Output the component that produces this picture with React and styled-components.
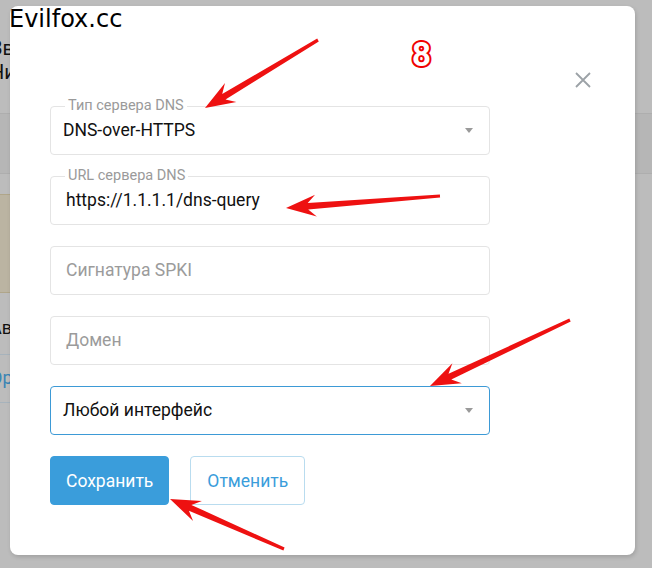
import React from 'react'
import styled, { createGlobalStyle } from 'styled-components'

const GlobalStyle = createGlobalStyle`
  html, body {
    margin: 0;
    padding: 0;
    background: #bcbcbc;
    font-family: Roboto, "Liberation Sans", sans-serif;
  }
`

const Page = styled.div`
  position: relative;
  width: 652px;
  height: 568px;
  overflow: hidden;
  background: #bcbcbc;
`

/* dimmed page behind the dialog */
const Backdrop = styled.div`
  display: flex;
  flex-direction: column;
`

const BackHeader = styled.div`
  height: 114px;
  border-bottom: 1px solid #aeaeae;
  padding-top: 36px;
  box-sizing: border-box;
  margin-left: -10px;
  font-size: 20px;
  line-height: 24px;
  color: #111;
`

const BackBand = styled.div`
  height: 59px;
  border-bottom: 1px solid #aeaeae;
  background: #b6b6b6;
`

const BackImage = styled.div`
  height: 97px;
  margin-top: 20px;
  width: 300px;
  background: #bbb4a2;
  border-top: 1px solid #b0a68a;
  border-bottom: 1px solid #b0a68a;
`

const BackText = styled.div`
  height: 62px;
  box-sizing: border-box;
  padding-top: 24px;
  margin-left: -10px;
  font-size: 18px;
  color: ${props => props.link ? '#3a85b5' : '#111'};
  border-bottom: 1px solid #a7b3bc;
  width: 300px;
`

const BackLink = styled(BackText)`
  height: 48px;
  padding-top: 12px;
`

const Dialog = styled.div`
  position: absolute;
  left: 10px;
  top: 6px;
  width: 625px;
  height: 549px;
  box-sizing: border-box;
  padding: 0 145px 0 40px;
  background: #fff;
  border-radius: 8px;
  box-shadow: 1px 2px 4px rgba(0, 0, 0, 0.15);
  display: flex;
  flex-direction: column;
`

const DialogHead = styled.div`
  height: 100px;
  position: relative;
`

const Close = styled.button`
  position: absolute;
  top: 64px;
  right: -103px;
  width: 20px;
  height: 20px;
  padding: 0;
  border: none;
  background: none;
  display: flex;
  align-items: center;
  justify-content: center;
`

const Fields = styled.div`
  display: flex;
  flex-direction: column;
  gap: 21px;
`

const Field = styled.div`
  position: relative;
  height: 49px;
  box-sizing: border-box;
  border: 1px solid ${props => props.focused ? '#3d9ad6' : '#e4e4e4'};
  border-radius: 4px;
  display: flex;
  align-items: center;
  padding: 0 ${props => props.select ? '12px' : '15px'};
  font-size: 17.5px;
  color: ${props => props.placeholder ? '#9b9b9b' : '#111'};
`

const Legend = styled.span`
  position: absolute;
  top: -10px;
  left: 14px;
  padding: 0 3px;
  background: #fff;
  font-size: 14.5px;
  line-height: 18px;
  color: #9a9a9a;
`

const Value = styled.span`
  flex: 1;
  margin-top: -2px;
`

const Caret = styled.span`
  width: 0;
  height: 0;
  margin-right: 4px;
  border-left: 4px solid transparent;
  border-right: 4px solid transparent;
  border-top: 5px solid #9a9a9a;
`

const Actions = styled.div`
  display: flex;
  gap: 21px;
  margin-top: 21px;
`

const Button = styled.button`
  height: 49px;
  box-sizing: border-box;
  padding: 0 ${props => props.primary ? '15px' : '16px'};
  border-radius: 4px;
  font-family: Roboto, "Liberation Sans", sans-serif;
  font-size: 17.5px;
  border: 1px solid ${props => props.primary ? '#3a9ddb' : '#b9dcef'};
  background: ${props => props.primary ? '#3a9ddb' : '#fff'};
  color: ${props => props.primary ? '#fff' : '#3a9ddb'};
`

const Watermark = styled.div`
  position: absolute;
  left: 9px;
  top: 5px;
  font-family: "DejaVu Sans", Verdana, sans-serif;
  font-size: 24px;
  line-height: 28px;
  color: #000;
`

const StepNumber = styled.div`
  position: absolute;
  left: 412px;
  top: 36px;
  font-family: Roboto, "Liberation Sans", sans-serif;
  font-weight: 700;
  font-size: 33px;
  line-height: 38px;
  color: #fff;
  -webkit-text-stroke: 4px #f00000;
  paint-order: stroke fill;
`

const Arrows = styled.svg`
  position: absolute;
  left: 0;
  top: 0;
  pointer-events: none;
`

const arrows = [
  { from: [318, 40], to: [205, 108] },
  { from: [440, 196], to: [286, 208] },
  { from: [570, 320], to: [430, 386] },
  { from: [284, 549], to: [170, 499] },
]

const arrowPoints = ({ from, to }) => {
  const dx = to[0] - from[0]
  const dy = to[1] - from[1]
  const len = Math.hypot(dx, dy)
  const ux = dx / len
  const uy = dy / len
  const nx = -uy
  const ny = ux
  const head = 30
  const back = 22
  const half = 11
  const tail = 1.6
  const neck = 3.2
  const p = (along, side) => {
    const x = from[0] + ux * along + nx * side
    const y = from[1] + uy * along + ny * side
    return `${x.toFixed(1)},${y.toFixed(1)}`
  }
  return [
    p(0, tail),
    p(len - back, neck),
    p(len - head, half),
    p(len, 0),
    p(len - head, -half),
    p(len - back, -neck),
    p(0, -tail),
  ].join(' ')
}

const CloseIcon = () => (
  <svg width="18" height="18" viewBox="0 0 18 18">
    <path d="M2 2 L16 16 M16 2 L2 16" stroke="#9ca2a7" strokeWidth="1.8" fill="none" />
  </svg>
)

const App = () => (
  <Page>
    <GlobalStyle />
    <Backdrop>
      <BackHeader>
        <div>Ввод</div>
        <div>Ник</div>
      </BackHeader>
      <BackBand />
      <BackImage />
      <BackText>Ав</BackText>
      <BackLink link>Ор</BackLink>
    </Backdrop>

    <Dialog>
      <DialogHead>
        <Close aria-label="Закрыть"><CloseIcon /></Close>
      </DialogHead>
      <Fields>
        <Field select>
          <Legend>Тип сервера DNS</Legend>
          <Value>DNS-over-HTTPS</Value>
          <Caret />
        </Field>
        <Field>
          <Legend>URL сервера DNS</Legend>
          <Value>https://1.1.1.1/dns-query</Value>
        </Field>
        <Field placeholder="true">
          <Value>Сигнатура SPKI</Value>
        </Field>
        <Field placeholder="true">
          <Value>Домен</Value>
        </Field>
        <Field select focused>
          <Value>Любой интерфейс</Value>
          <Caret />
        </Field>
      </Fields>
      <Actions>
        <Button primary>Сохранить</Button>
        <Button>Отменить</Button>
      </Actions>
    </Dialog>

    <Watermark>Evilfox.cc</Watermark>
    <StepNumber>8</StepNumber>
    <Arrows width="652" height="568" viewBox="0 0 652 568">
      {arrows.map((a, i) => (
        <polygon key={i} points={arrowPoints(a)} fill="#ee1111" />
      ))}
    </Arrows>
  </Page>
)

export default App
